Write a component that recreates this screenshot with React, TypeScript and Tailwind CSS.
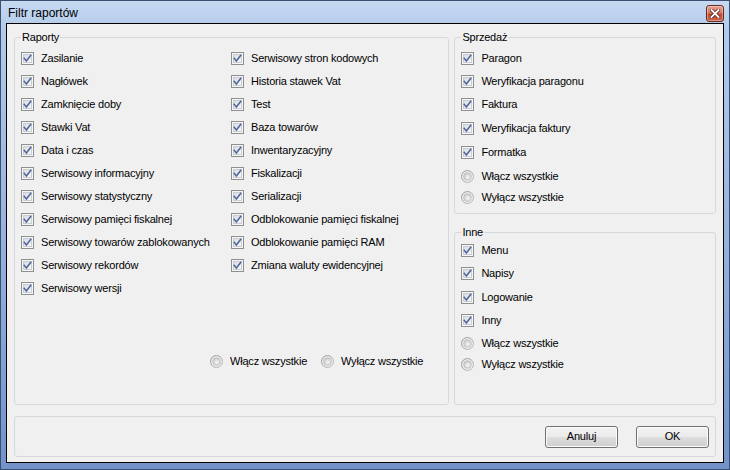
import React from "react";

const FONT = "font-['Liberation_Sans',Arial,sans-serif]";

const CheckBox = () => (
  <svg width="13" height="13" viewBox="0 0 13 13" className="shrink-0">
    <defs>
      <linearGradient id="cbIn" x1="0" y1="0" x2="1" y2="1">
        <stop offset="0" stopColor="#d6dae0" />
        <stop offset="1" stopColor="#fafbfc" />
      </linearGradient>
    </defs>
    <rect x="0.5" y="0.5" width="12" height="12" fill="#f6f6f6" stroke="#8e8f8f" />
    <rect x="2.5" y="2.5" width="8" height="8" fill="url(#cbIn)" stroke="#c9cdd3" />
    <path d="M3.3 6.4 L5.4 8.9 L9.7 3.4" fill="none" stroke="#52669a" strokeWidth="1.6" strokeLinecap="square" />
  </svg>
);

const RadioBox = () => (
  <svg width="13" height="13" viewBox="0 0 13 13" className="shrink-0">
    <defs>
      <linearGradient id="rbOut" x1="0" y1="0" x2="1" y2="1">
        <stop offset="0" stopColor="#949494" />
        <stop offset="1" stopColor="#c4c4c4" />
      </linearGradient>
      <radialGradient id="rbIn" cx="0.55" cy="0.6" r="0.6">
        <stop offset="0" stopColor="#f7f7f7" />
        <stop offset="1" stopColor="#c6c6c6" />
      </radialGradient>
    </defs>
    <circle cx="6.5" cy="6.5" r="6" fill="#e9e9e9" stroke="url(#rbOut)" />
    <circle cx="6.5" cy="6.5" r="3.8" fill="url(#rbIn)" stroke="#b5b5b5" strokeWidth="0.6" />
  </svg>
);

type Row = { label: string; cls: string; radio?: boolean };

const Item = ({ label, cls, radio }: Row) => (
  <div className={`flex items-center ${cls}`}>
    {radio ? <RadioBox /> : <CheckBox />}
    <span className="ml-[7px] whitespace-nowrap">{label}</span>
  </div>
);

const col1 = [
  "Zasilanie",
  "Nagłówek",
  "Zamknięcie doby",
  "Stawki Vat",
  "Data i czas",
  "Serwisowy informacyjny",
  "Serwisowy statystyczny",
  "Serwisowy pamięci fiskalnej",
  "Serwisowy towarów zablokowanych",
  "Serwisowy rekordów",
  "Serwisowy wersji",
];

const col2 = [
  "Serwisowy stron kodowych",
  "Historia stawek Vat",
  "Test",
  "Baza towarów",
  "Inwentaryzacyjny",
  "Fiskalizacji",
  "Serializacji",
  "Odblokowanie pamięci fiskalnej",
  "Odblokowanie pamięci RAM",
  "Zmiana waluty ewidencyjnej",
];

const sprzedaz: Row[] = [
  { label: "Paragon", cls: "h-[20px] mt-[4px]" },
  { label: "Weryfikacja paragonu", cls: "h-[20px] mt-[3px]" },
  { label: "Faktura", cls: "h-[20px] mt-[3px]" },
  { label: "Weryfikacja faktury", cls: "h-[20px] mt-[4px]" },
  { label: "Formatka", cls: "h-[20px] mt-[4px]" },
  { label: "Włącz wszystkie", cls: "h-[20px] mt-[4px]", radio: true },
  { label: "Wyłącz wszystkie", cls: "h-[20px] mt-[1px]", radio: true },
];

const inne: Row[] = [
  { label: "Menu", cls: "h-[20px] mt-[1px]" },
  { label: "Napisy", cls: "h-[20px] mt-[3px]" },
  { label: "Logowanie", cls: "h-[20px] mt-[4px]" },
  { label: "Inny", cls: "h-[20px] mt-[3px]" },
  { label: "Włącz wszystkie", cls: "h-[20px] mt-[3px]", radio: true },
  { label: "Wyłącz wszystkie", cls: "h-[20px] mt-[1px]", radio: true },
];

const Button = ({ label }: { label: string }) => (
  <div className="w-[73px] h-[22px] rounded-[3px] border border-[#707070] bg-[linear-gradient(180deg,#f2f2f2_0%,#ebebeb_48%,#dddddd_52%,#cfcfcf_100%)] shadow-[inset_0_0_0_1px_#fcfcfc] flex items-center justify-center">
    {label}
  </div>
);

export default function App() {
  return (
    <div className={`${FONT} w-[730px] h-[470px] flex flex-col border border-[#3b4f72] bg-[linear-gradient(180deg,#c6d9f1_0%,#b3cbea_6%,#93b0dc_55%,#7292c9_100%)] text-[11px] tracking-[-0.2px] text-black`}>
      {/* title bar */}
      <div className="h-[22px] flex items-start justify-between pl-[7px] pr-[5px]">
        <span className="text-[12px] leading-[14px] tracking-normal mt-[5px]">Filtr raportów</span>
        <div className="mt-[4px] w-[18px] h-[17px] rounded-[3px] border border-[#6b2a1f] bg-[linear-gradient(180deg,#e6a392_0%,#d27966_45%,#c04a33_55%,#c9654c_100%)] shadow-[inset_0_0_0_1px_rgba(255,255,255,0.35)] flex items-center justify-center">
          <svg width="10" height="9" viewBox="0 0 10 9">
            <path d="M1.5 1 L8.5 8 M8.5 1 L1.5 8" stroke="#5a1f14" strokeWidth="3.4" strokeLinecap="square" />
            <path d="M1.5 1 L8.5 8 M8.5 1 L1.5 8" stroke="#ffffff" strokeWidth="1.8" strokeLinecap="square" />
          </svg>
        </div>
      </div>

      {/* client area */}
      <div className="mx-[5px] h-[440px] border border-black bg-[#f0f0f0] flex flex-col px-[7px] pt-[6px]">
        <div className="flex gap-[5px]">
          <fieldset className="w-[436px] h-[375px] border border-[#d5d9dc] rounded-[3px] pl-[6px]">
            <legend className="px-[1px] leading-[14px]">Raporty</legend>
            <div className="flex pt-[3px]">
              <div className="w-[210px] flex flex-col">
                {col1.map((t) => (
                  <Item key={t} label={t} cls="h-[23px]" />
                ))}
              </div>
              <div className="flex flex-col">
                {col2.map((t) => (
                  <Item key={t} label={t} cls="h-[23px]" />
                ))}
              </div>
            </div>
            <div className="flex mt-[51px] pl-[189px]">
              <Item label="Włącz wszystkie" cls="h-[20px] w-[111px]" radio />
              <Item label="Wyłącz wszystkie" cls="h-[20px]" radio />
            </div>
          </fieldset>

          <div className="w-[262px] flex flex-col gap-[11px]">
            <fieldset className="h-[184px] border border-[#d5d9dc] rounded-[3px] pl-[6px]">
              <legend className="px-[1px] leading-[14px]">Sprzedaż</legend>
              <div className="flex flex-col">
                {sprzedaz.map((r) => (
                  <Item key={r.label} {...r} />
                ))}
              </div>
            </fieldset>
            <fieldset className="h-[180px] border border-[#d5d9dc] rounded-[3px] pl-[6px]">
              <legend className="px-[1px] leading-[14px]">Inne</legend>
              <div className="flex flex-col">
                {inne.map((r) => (
                  <Item key={r.label} {...r} />
                ))}
              </div>
            </fieldset>
          </div>
        </div>

        <div className="mt-[11px] h-[41px] border border-[#d5d9dc] rounded-[3px] flex items-center justify-end pr-[6px] gap-[18px]">
          <Button label="Anuluj" />
          <Button label="OK" />
        </div>
      </div>
    </div>
  );
}
